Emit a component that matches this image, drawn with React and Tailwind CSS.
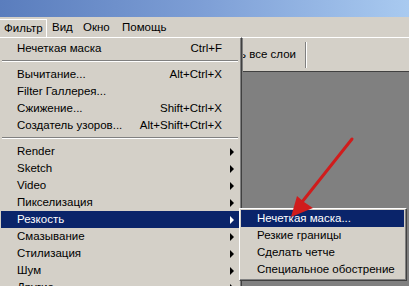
import React from 'react';

const font = { fontFamily: '"Liberation Sans", Arial, sans-serif' };

const mainItems = [
  { label: 'Нечеткая маска', shortcut: 'Ctrl+F' },
  { sep: true },
  { label: 'Вычитание...', shortcut: 'Alt+Ctrl+X' },
  { label: 'Filter Галлерея...' },
  { label: 'Сжижение...', shortcut: 'Shift+Ctrl+X' },
  { label: 'Создатель узоров...', shortcut: 'Alt+Shift+Ctrl+X' },
  { sep: true },
  { label: 'Render', sub: true },
  { label: 'Sketch', sub: true },
  { label: 'Video', sub: true },
  { label: 'Пикселизация', sub: true },
  { label: 'Резкость', sub: true, active: true },
  { label: 'Смазывание', sub: true },
  { label: 'Стилизация', sub: true },
  { label: 'Шум', sub: true },
  { label: 'Другие', sub: true },
];

const subItems = [
  { label: 'Нечеткая маска...', active: true },
  { label: 'Резкие границы' },
  { label: 'Сделать четче' },
  { label: 'Специальное обострение' },
];

function Arrow({ light }) {
  return (
    <svg width="5" height="8" viewBox="0 0 5 8" className="shrink-0">
      <path d="M0 0 L4 4 L0 8 Z" fill={light ? '#ffffff' : '#000000'} />
    </svg>
  );
}

function MenuRow({ item }) {
  if (item.sep) {
    return (
      <div className="h-[9px] px-[1px] pt-[3px]">
        <div className="h-[1px] bg-[#808080]" />
        <div className="h-[1px] bg-white" />
      </div>
    );
  }
  return (
    <div
      className={`h-[17px] flex items-center pl-[16px] pr-[4px] ${
        item.active ? 'bg-[#0a246a] text-white' : 'text-black'
      }`}
    >
      <span className="flex-1 whitespace-nowrap">{item.label}</span>
      {item.shortcut && <span className="whitespace-nowrap mr-[13px]">{item.shortcut}</span>}
      {item.sub && <Arrow light={item.active} />}
    </div>
  );
}

export default function App() {
  return (
    <div className="relative w-[409px] h-[286px] overflow-hidden bg-[#d4d0c8] text-[11.5px] leading-none" style={font}>
      {/* title bar */}
      <div className="h-[17px] bg-gradient-to-r from-[#5a7dbd] via-[#7e9fd6] to-[#a9caf0]" />

      {/* menu bar */}
      <div className="h-[20px] flex items-end text-black">
        <div className="h-[18px] w-[47px] flex items-center pl-[4px] border-t border-r border-white">Фильтр</div>
        <div className="h-[18px] w-[31px] flex items-center pl-[5px]">Вид</div>
        <div className="h-[18px] w-[44px] flex items-center pl-[5px]">Окно</div>
        <div className="h-[18px] flex items-center">Помощь</div>
      </div>

      {/* toolbar */}
      <div className="h-[34px] flex items-center border-t border-white">
        <div className="w-[296px] text-right whitespace-nowrap text-black">Показать все слои</div>
        <div className="ml-[9px] h-[26px] w-[2px] border-l border-[#808080] border-r border-r-white" />
      </div>
      <div className="h-[1px] bg-[#404040]" />
      <div className="h-[250px] bg-[#808080]" />

      {/* Фильтр dropdown */}
      <div className="absolute left-[-2px] top-[37px] w-[244px] bg-[#d4d0c8] border border-t-white border-l-white border-r-[#404040] border-b-[#404040] shadow-[1px_1px_0_#808080]">
        <div className="border-r border-[#808080] pt-[2px] pl-[2px] pr-[1px]">
          {mainItems.map((item, i) => (
            <MenuRow key={i} item={item} />
          ))}
        </div>
      </div>

      {/* Резкость submenu */}
      <div className="absolute left-[239px] top-[208px] w-[168px] bg-[#d4d0c8] border border-t-white border-l-white border-r-[#404040] border-b-[#404040]">
        <div className="border-r border-b border-[#808080] p-[1px]">
          {subItems.map((item, i) => (
            <div
              key={i}
              className={`h-[17px] flex items-center pl-[16px] whitespace-nowrap ${
                item.active ? 'bg-[#0a246a] text-white' : 'text-black'
              }`}
            >
              {item.label}
            </div>
          ))}
        </div>
      </div>

      {/* red annotation arrow */}
      <svg className="absolute left-0 top-0 pointer-events-none" width="409" height="286">
        <line x1="352" y1="139" x2="302" y2="202" stroke="#d01c1c" strokeWidth="3" strokeLinecap="round" />
        <polygon points="291,217 297,196 304,202 313,208" fill="#d01c1c" />
      </svg>
    </div>
  );
}
